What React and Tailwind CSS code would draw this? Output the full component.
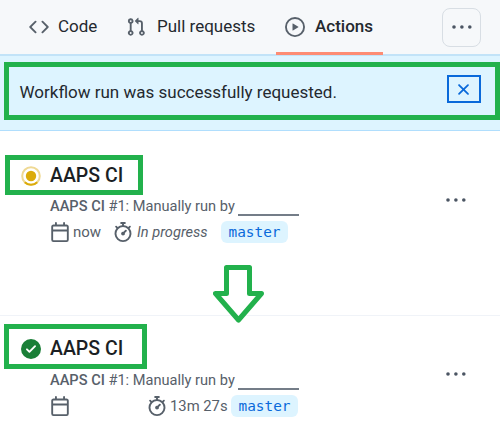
import React from "react";

const paths = {
  code: "m11.28 3.22 4.25 4.25a.75.75 0 0 1 0 1.06l-4.25 4.25a.749.749 0 0 1-1.275-.326.749.749 0 0 1 .215-.734L13.94 8l-3.72-3.72a.749.749 0 0 1 .326-1.275.749.749 0 0 1 .734.215Zm-6.56 0a.751.751 0 0 1 1.042.018.751.751 0 0 1 .018 1.042L2.06 8l3.72 3.72a.749.749 0 0 1-.326 1.275.749.749 0 0 1-.734-.215L.47 8.53a.75.75 0 0 1 0-1.06Z",
  pull: "M1.5 3.25a2.25 2.25 0 1 1 3 2.122v5.256a2.251 2.251 0 1 1-1.5 0V5.372A2.25 2.25 0 0 1 1.5 3.25Zm5.677-.177L9.573.677A.25.25 0 0 1 10 .854V2.5h1A2.5 2.5 0 0 1 13.5 5v5.628a2.251 2.251 0 1 1-1.5 0V5a1 1 0 0 0-1-1h-1v1.646a.25.25 0 0 1-.427.177L7.177 3.427a.25.25 0 0 1 0-.354ZM3.75 2.5a.75.75 0 1 0 0 1.5.75.75 0 0 0 0-1.5Zm0 9.5a.75.75 0 1 0 0 1.5.75.75 0 0 0 0-1.5Zm8.25.75a.75.75 0 1 0 1.5 0 .75.75 0 0 0-1.5 0Z",
  play: "M8 0a8 8 0 1 1 0 16A8 8 0 0 1 8 0ZM1.5 8a6.5 6.5 0 1 0 13 0 6.5 6.5 0 0 0-13 0Zm4.879-2.773 4.264 2.559a.25.25 0 0 1 0 .428l-4.264 2.559A.25.25 0 0 1 6 10.559V5.442a.25.25 0 0 1 .379-.215Z",
  close: "M3.72 3.72a.75.75 0 0 1 1.06 0L8 6.94l3.22-3.22a.749.749 0 0 1 1.275.326.749.749 0 0 1-.215.734L9.06 8l3.22 3.22a.749.749 0 0 1-.326 1.275.749.749 0 0 1-.734-.215L8 9.06l-3.22 3.22a.751.751 0 0 1-1.042-.018.751.751 0 0 1-.018-1.042L6.94 8 3.72 4.78a.75.75 0 0 1 0-1.06Z",
  calendar: "M4.75 0a.75.75 0 0 1 .75.75V2h5V.75a.75.75 0 0 1 1.5 0V2h1.25c.966 0 1.75.784 1.75 1.75v10.5A1.75 1.75 0 0 1 13.25 16H2.75A1.75 1.75 0 0 1 1 14.25V3.75C1 2.784 1.784 2 2.75 2H4V.75A.75.75 0 0 1 4.75 0ZM2.5 7.5v6.75c0 .138.112.25.25.25h10.5a.25.25 0 0 0 .25-.25V7.5Zm10.75-4H2.75a.25.25 0 0 0-.25.25V6h11V3.75a.25.25 0 0 0-.25-.25Z",
  stopwatch: "M5.75.75A.75.75 0 0 1 6.5 0h3a.75.75 0 0 1 0 1.5h-.75v1l-.001.041a6.724 6.724 0 0 1 3.464 1.435l.007-.006.75-.75a.749.749 0 0 1 1.275.326.749.749 0 0 1-.215.734l-.75.75-.006.007a6.75 6.75 0 1 1-10.548 0L2.72 5.03l-.75-.75a.751.751 0 0 1 .018-1.042.751.751 0 0 1 1.042-.018l.75.75.007.006A6.72 6.72 0 0 1 7.25 2.541V1.5H6.5a.75.75 0 0 1-.75-.75ZM8 14.5a5.25 5.25 0 1 0-.001-10.501A5.25 5.25 0 0 0 8 14.5Zm.389-6.7 1.33-1.33a.75.75 0 1 1 1.061 1.06L9.45 8.861A1.503 1.503 0 0 1 8 10.75a1.499 1.499 0 1 1 .389-2.95Z",
  check: "M8 16A8 8 0 1 1 8 0a8 8 0 0 1 0 16Zm3.78-9.72a.751.751 0 0 0-.018-1.042.751.751 0 0 0-1.042-.018L6.75 9.19 5.28 7.72a.751.751 0 0 0-1.042.018.751.751 0 0 0-.018 1.042l2 2a.75.75 0 0 0 1.06 0Z",
};

function Icon({ name, className = "size-5" }) {
  return (
    <svg viewBox="0 0 16 16" fill="currentColor" className={`shrink-0 ${className}`} aria-hidden="true">
      <path d={paths[name]} />
    </svg>
  );
}

function Dots() {
  return (
    <svg viewBox="0 0 20 4" fill="#4b5563" className="h-1 w-5 shrink-0" aria-hidden="true">
      <circle cx="2" cy="2" r="1.8" />
      <circle cx="9.9" cy="2" r="1.8" />
      <circle cx="17.8" cy="2" r="1.8" />
    </svg>
  );
}

function Running() {
  return (
    <svg viewBox="0 0 20 20" fill="none" className="size-5 shrink-0" aria-hidden="true">
      <circle cx="10" cy="10" r="8.8" stroke="#efd994" strokeWidth="2" />
      <path d="M3.8 16.2a8.8 8.8 0 0 0 12.4 0" stroke="#dbab0a" strokeWidth="2" />
      <circle cx="10" cy="10" r="5.2" fill="#dbab0a" />
    </svg>
  );
}

function Run({ status, titleClass, dotsClass, children }) {
  return (
    <div className="flex">
      <div className="w-[50px] shrink-0 pt-[10px] pl-[20.5px]">{status}</div>
      <div className="min-w-0 flex-1 whitespace-nowrap text-[#57606a]">
        <h2 className={`text-[19.5px] leading-[40px] font-medium text-[#1b1f24] ${titleClass}`}>AAPS CI</h2>
        <div className="flex h-[23px] text-[14.6px] leading-[22px]">
          <span className="w-[188px]"><b className="font-medium">AAPS CI</b> #1: Manually run by</span>
          <span className="h-[21px] w-[61px] border-b-2 border-[#747d88]" />
        </div>
        <div className="mt-[3px] flex h-[22px] items-center text-[15px] leading-[22px]">{children}</div>
      </div>
      <div className={`mr-[34px] ${dotsClass}`}><Dots /></div>
    </div>
  );
}

function Branch() {
  return (
    <span className="flex h-[22px] w-[67px] items-center justify-center rounded-md bg-[#ddf4ff] font-['DejaVu_Sans_Mono',monospace] text-[14.4px] text-[#0969da]">
      master
    </span>
  );
}

export default function App() {
  return (
    <div className="relative h-[440px] w-[500px] overflow-hidden bg-white font-[Roboto,sans-serif] text-[#24292f]">
      <nav className="flex h-[54px] items-center bg-[#f6f8fa] pl-[29px] text-[17px] text-[#57606a]">
        <Icon name="code" />
        <span className="w-[68px] pl-[9px] text-[#24292f]">Code</span>
        <Icon name="pull" className="ml-[9px] size-5" />
        <span className="w-[129.5px] pl-[11px] whitespace-nowrap text-[#24292f]">Pull requests</span>
        <div className="relative flex h-full w-[107px] items-center pl-[9.5px]">
          <Icon name="play" />
          <span className="pl-[10px] font-medium text-[#24292f]">Actions</span>
          <span className="absolute bottom-[-1px] left-[0.5px] h-[3px] w-[107px] bg-[#fd8c73]" />
        </div>
        <div className="ml-[59.5px] flex size-[39px] items-center justify-center rounded-lg border border-[#d8dee4]">
          <Dots />
        </div>
      </nav>
      <section className="flex h-[77px] items-start justify-between border-t-2 border-b border-t-[#c2e3f8] border-b-[#b0defd] bg-[#ddf4ff] pt-[19px] pr-[19.5px] pl-[19.5px]">
        <p className="pt-[5px] text-[17px] leading-6">Workflow run was successfully requested.</p>
        <button className="flex h-[28px] w-[34px] items-center justify-center border-2 border-[#0969da] text-[#0969da]">
          <Icon name="close" className="size-[19px]" />
        </button>
      </section>
      <main>
        <article className="h-[185px] border-b border-[#f0f3f8] pt-[25px]">
          <Run status={<Running />} titleClass="h-[39px]" dotsClass="pt-[42px]">
            <Icon name="calendar" />
            <span className="w-[43px] pl-[3px]">now</span>
            <Icon name="stopwatch" />
            <span className="w-[88px] pl-[4px] text-[14.6px] italic">In progress</span>
            <Branch />
          </Run>
        </article>
        <article className="pt-[13px]">
          <Run status={<Icon name="check" className="size-5 text-[#1a7f37]" />} titleClass="h-[40px]" dotsClass="pt-[43px]">
            <Icon name="calendar" />
            <Icon name="stopwatch" className="ml-[77px] size-5" />
            <span className="w-[64px] pl-[3px] text-[14.8px]">13m 27s</span>
            <Branch />
          </Run>
        </article>
      </main>
      <div className="absolute top-[62px] left-[4px] h-[58px] w-[496px] border-5 border-[#22b14c]" />
      <div className="absolute top-[155px] left-[5px] h-[40px] w-[138px] border-5 border-[#22b14c]" />
      <div className="absolute top-[324px] left-[4px] h-[45px] w-[143px] border-5 border-[#22b14c]" />
      <svg viewBox="0 0 52 60" className="absolute top-[264px] left-[213px] h-[60px] w-[52px]" fill="#fff" stroke="#22b14c" strokeWidth="5" strokeLinejoin="round" aria-hidden="true">
        <path d="M13.5 3.5h23V29.5h12L25.5 56 2.5 29.5h11Z" />
      </svg>
    </div>
  );
}
